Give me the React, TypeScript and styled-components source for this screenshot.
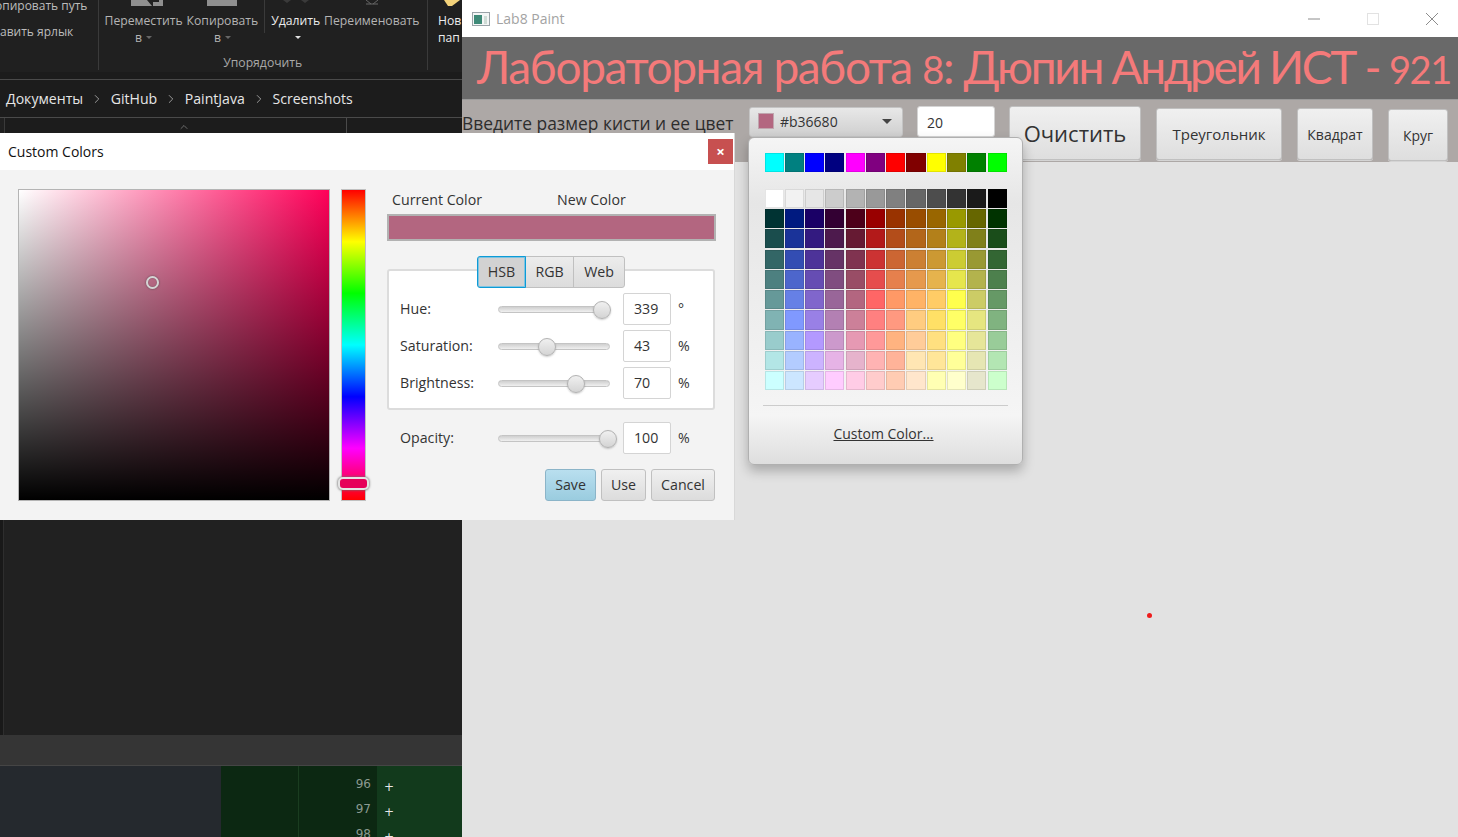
import React, { FC } from "react";
import styled, { createGlobalStyle } from "styled-components";
import { ChevronRight, ChevronUp } from "lucide-react";

const uiFont = `"Open Sans", "Noto Sans", sans-serif`;

const GlobalStyle = createGlobalStyle`
  html, body {
    margin: 0;
    padding: 0;
    height: 100%;
    overflow: hidden;
    background: #202020;
    font-family: ${uiFont};
  }
  * {
    box-sizing: border-box;
  }
`;

const topColors = [
  "#00ffff", "#008080", "#0000ff", "#000080", "#ff00ff", "#800080",
  "#ff0000", "#800000", "#ffff00", "#808000", "#008000", "#00ff00",
];

const paletteColors = [
  "#ffffff", "#f2f2f2", "#e6e6e6", "#cccccc", "#b3b3b3", "#999999", "#808080", "#666666", "#4d4d4d", "#333333", "#1a1a1a", "#000000",
  "#003333", "#001a80", "#1a0066", "#330033", "#4d001a", "#990000", "#993300", "#994d00", "#996600", "#999900", "#666600", "#003300",
  "#1a4d4d", "#1a3399", "#331a80", "#4d1a4d", "#661a33", "#b31a1a", "#b34d1a", "#b3661a", "#b3801a", "#b3b31a", "#80801a", "#1a4d1a",
  "#336666", "#334db3", "#4d3399", "#663366", "#803350", "#cc3333", "#cc6633", "#cc8033", "#cc9933", "#cccc33", "#999933", "#336633",
  "#4d8080", "#4d66cc", "#664db3", "#804d80", "#994d66", "#e64d4d", "#e6804d", "#e6994d", "#e6b34d", "#e6e64d", "#b3b34d", "#4d804d",
  "#669999", "#6680e6", "#8066cc", "#996699", "#b36680", "#ff6666", "#ff9966", "#ffb366", "#ffcc66", "#ffff4d", "#cccc66", "#669966",
  "#80b3b3", "#8099ff", "#9980e6", "#b380b3", "#cc8099", "#ff8080", "#ff9980", "#ffcc80", "#ffe066", "#ffff66", "#e6e680", "#80b380",
  "#99cccc", "#99b3ff", "#b399ff", "#cc99cc", "#e699b3", "#ff9999", "#ffb380", "#ffcc99", "#ffe080", "#ffff80", "#e6e699", "#99cc99",
  "#b3e6e6", "#b3ccff", "#ccb3ff", "#e6b3e6", "#e6b3cc", "#ffb3b3", "#ffb399", "#ffe6b3", "#ffe699", "#ffff99", "#e6e6b3", "#b3e6b3",
  "#ccffff", "#cce6ff", "#e6ccff", "#ffccff", "#ffcce6", "#ffcccc", "#ffccb3", "#ffe6cc", "#ffffb3", "#ffffcc", "#e6e6cc", "#ccffcc",
];

const sliders = [
  { label: "Hue:", value: "339", unit: "°", thumb: 103 },
  { label: "Saturation:", value: "43", unit: "%", thumb: 48 },
  { label: "Brightness:", value: "70", unit: "%", thumb: 77 },
];

const crumbs = ["Документы", "GitHub", "PaintJava", "Screenshots"];

interface SliderProps {
  label: string;
  value: string;
  unit: string;
  thumb: number;
}

const SliderRow: FC<SliderProps> = ({ label, value, unit, thumb }: SliderProps) => (
  <Row>
    <RowLabel>{label}</RowLabel>
    <Track>
      <Thumb style={{ left: thumb - 9 }} />
    </Track>
    <NumberBox>{value}</NumberBox>
    <Unit>{unit}</Unit>
  </Row>
);

export default function App() {
  return (
    <Stage>
      <GlobalStyle />
      <Explorer>
        <Ribbon>
          <ClipboardGroup>
            <ClipLine $shift={-5}>опировать путь</ClipLine>
            <ClipLine>авить ярлык</ClipLine>
          </ClipboardGroup>
          <OrganizeGroup>
            <Tools>
              <ToolPair>
                <Tool>
                  <svg width="38" height="6" viewBox="0 0 38 6">
                    <path d="M6 0h16l5 6H6zM28 6V2h6V0h4v6z" fill="#8f8f8f" />
                  </svg>
                  <ToolText>Переместить</ToolText>
                  <ToolText>в<Caret /></ToolText>
                </Tool>
                <Tool>
                  <svg width="30" height="6" viewBox="0 0 30 6">
                    <rect width="30" height="6" fill="#8f8f8f" />
                  </svg>
                  <ToolText>Копировать</ToolText>
                  <ToolText>в<Caret /></ToolText>
                </Tool>
              </ToolPair>
              <ToolPair $divided>
                <Tool>
                  <svg width="30" height="6" viewBox="0 0 30 6">
                    <path d="M2 0l4 3 4-3zM20 0l4 3 4-3z" fill="#3a3a3a" />
                  </svg>
                  <ToolText $bright>Удалить</ToolText>
                  <ToolText $bright><Caret $bright /></ToolText>
                </Tool>
                <Tool>
                  <svg width="14" height="6" viewBox="0 0 14 6">
                    <path d="M1 0l5 4M13 0L8 4M1 4h12" stroke="#666" fill="none" />
                  </svg>
                  <ToolText>Переименовать</ToolText>
                </Tool>
              </ToolPair>
            </Tools>
            <GroupCaption>Упорядочить</GroupCaption>
          </OrganizeGroup>
          <NewGroup>
            <svg width="24" height="6" viewBox="0 0 24 6">
              <path d="M6 0h16l-8 6H10z" fill="#f3d27a" />
            </svg>
            <ToolText $bright>Нов</ToolText>
            <ToolText $bright>пап</ToolText>
          </NewGroup>
        </Ribbon>
        <Breadcrumb>
          {crumbs.map((crumb, i) => (
            <React.Fragment key={crumb}>
              {i > 0 && <ChevronRight size={14} strokeWidth={1.5} color="#a8a8a8" />}
              <Crumb>{crumb}</Crumb>
            </React.Fragment>
          ))}
        </Breadcrumb>
        <ListHeader>
          <SortCell>
            <ChevronUp size={12} strokeWidth={1} color="#bbb" />
          </SortCell>
        </ListHeader>
        <ListBody />
        <StatusStrip />
        <DiffView>
          <DiffBlank />
          <DiffGutter />
          <DiffNumbers>
            <LineNo>96</LineNo>
            <LineNo>97</LineNo>
            <LineNo>98</LineNo>
          </DiffNumbers>
          <DiffCode>
            <Plus>+</Plus>
            <Plus>+</Plus>
            <Plus>+</Plus>
          </DiffCode>
        </DiffView>
      </Explorer>

      <Paint>
        <TitleBar>
          <AppIcon viewBox="0 0 18 14">
            <rect x="0.5" y="0.5" width="17" height="13" fill="#f4f6f6" stroke="#9aa3a8" />
            <rect x="2" y="3" width="8" height="9" fill="#3f8a78" />
            <rect x="12" y="4" width="3" height="8" fill="#cfdcd6" />
          </AppIcon>
          <AppName>Lab8 Paint</AppName>
          <WindowControls>
            <WinButton viewBox="0 0 14 14">
              <path d="M1 7h12" stroke="#8c8c8c" />
            </WinButton>
            <WinButton viewBox="0 0 14 14">
              <rect x="1.5" y="1.5" width="11" height="11" fill="none" stroke="#e2e2e2" />
            </WinButton>
            <WinButton viewBox="0 0 14 14">
              <path d="M1 1l12 12M13 1L1 13" stroke="#8c8c8c" fill="none" />
            </WinButton>
          </WindowControls>
        </TitleBar>
        <Banner>
          Лабораторная работа <Figures>8</Figures>: <Tight>Дюпин Андрей ИСТ - </Tight><Figures>921</Figures>
        </Banner>
        <Toolbar>
          <BrushLabel>Введите размер кисти и ее цвет</BrushLabel>
          <ColorCombo>
            <ComboSwatch />
            <ComboValue>#b36680</ComboValue>
            <ComboArrow />
          </ColorCombo>
          <SizeField>20</SizeField>
          <FxButton $w={132} $h={54} $size={22} $top={7}>Очистить</FxButton>
          <FxButton $w={126} $h={52} $size={15} $top={9}>Треугольник</FxButton>
          <FxButton $w={76} $h={52} $size={14} $top={9}>Квадрат</FxButton>
          <FxButton $w={60} $h={52} $size={14} $top={10}>Круг</FxButton>
        </Toolbar>
        <Canvas>
          <Dot />
        </Canvas>
      </Paint>

      <Dialog>
        <DialogTitle>
          <span>Custom Colors</span>
          <CloseBox>×</CloseBox>
        </DialogTitle>
        <DialogBody>
          <SvSquare>
            <SvCursor />
          </SvSquare>
          <HueBar>
            <HueThumb />
          </HueBar>
          <Controls>
            <ColorLabels>
              <CurrentLabel>Current Color</CurrentLabel>
              <span>New Color</span>
            </ColorLabels>
            <NewSwatch />
            <Tabs>
              <Tab $w={49} $active>HSB</Tab>
              <Tab $w={49}>RGB</Tab>
              <Tab $w={52}>Web</Tab>
            </Tabs>
            <SliderPanel>
              {sliders.map((s) => (
                <SliderRow key={s.label} {...s} />
              ))}
            </SliderPanel>
            <OpacityRow>
              <RowLabel>Opacity:</RowLabel>
              <Track>
                <Thumb style={{ left: 100 }} />
              </Track>
              <NumberBox>100</NumberBox>
              <Unit>%</Unit>
            </OpacityRow>
            <Actions>
              <DialogButton $w={51} $save>Save</DialogButton>
              <DialogButton $w={45}>Use</DialogButton>
              <DialogButton $w={64}>Cancel</DialogButton>
            </Actions>
          </Controls>
        </DialogBody>
      </Dialog>

      <Popup>
        <TopSwatches>
          {topColors.map((c) => (
            <Swatch key={c} $color={c} />
          ))}
        </TopSwatches>
        <SwatchGrid>
          {paletteColors.map((c, i) => (
            <Swatch key={i} $color={c} />
          ))}
        </SwatchGrid>
        <PopupRule />
        <CustomLink>Custom Color...</CustomLink>
      </Popup>
    </Stage>
  );
}

const Stage = styled.div`
  position: relative;
  display: flex;
  width: 1458px;
  height: 837px;
  overflow: hidden;
`;

/* explorer window behind the dialog */
const Explorer = styled.div`
  display: flex;
  flex-direction: column;
  width: 462px;
  height: 837px;
  background: #202020;
  color: #c8c8c8;
  overflow: hidden;
`;

const Ribbon = styled.div`
  display: flex;
  flex: none;
  height: 80px;
  border-bottom: 1px solid #4a4a4a;
  box-shadow: inset 0 -7px 0 #1c1c1c;
`;

const ClipboardGroup = styled.div`
  width: 99px;
  height: 70px;
  border-right: 1px solid #3a3a3a;
  font-size: 12px;
  line-height: 17px;
  overflow: hidden;
`;

const ClipLine = styled.div<{ $shift?: number }>`
  height: 26px;
  margin-top: -3px;
  margin-left: ${(p) => p.$shift ?? 0}px;
  white-space: nowrap;
  color: #bdbdbd;
  &:last-child {
    margin-top: 0;
  }
`;

const OrganizeGroup = styled.div`
  display: flex;
  flex-direction: column;
  width: 331px;
  height: 70px;
  border-right: 1px solid #3a3a3a;
`;

const Tools = styled.div`
  display: flex;
  height: 52px;
`;

const ToolPair = styled.div<{ $divided?: boolean }>`
  display: flex;
  align-items: flex-start;
  gap: 4px;
  padding: 0 6px;
  height: ${(p) => (p.$divided ? "33px" : "52px")};
  ${(p) => p.$divided && "border-left: 1px solid #3a3a3a; overflow: visible;"}
`;

const Tool = styled.div`
  display: flex;
  flex-direction: column;
  align-items: center;
  white-space: nowrap;
  svg {
    display: block;
    margin-bottom: 6px;
  }
`;

const ToolText = styled.div<{ $bright?: boolean }>`
  font-size: 12.2px;
  line-height: 17px;
  color: ${(p) => (p.$bright ? "#ececec" : "#b4b4b4")};
`;

const Caret = styled.span<{ $bright?: boolean }>`
  display: inline-block;
  margin-left: 4px;
  vertical-align: 3px;
  border-left: 3.5px solid transparent;
  border-right: 3.5px solid transparent;
  border-top: 3px solid ${(p) => (p.$bright ? "#e0e0e0" : "#666")};
`;

const GroupCaption = styled.div`
  text-align: center;
  font-size: 12.2px;
  line-height: 17px;
  color: #a8a8a8;
  margin-top: 2px;
`;

const NewGroup = styled.div`
  display: flex;
  flex-direction: column;
  align-items: flex-start;
  padding-left: 10px;
  white-space: nowrap;
  svg {
    display: block;
    margin-bottom: 6px;
  }
`;

const Breadcrumb = styled.div`
  display: flex;
  align-items: center;
  flex: none;
  gap: 6.8px;
  height: 38px;
  padding-left: 6px;
  background: #1c1c1c;
  border-bottom: 1px solid #4a4a4a;
`;

const Crumb = styled.span`
  font-size: 14.1px;
  color: #e6e6e6;
  white-space: nowrap;
`;

const ListHeader = styled.div`
  display: flex;
  flex: none;
  height: 15px;
  margin-left: 4px;
  background: #1c1c1c;
`;

const SortCell = styled.div`
  display: flex;
  justify-content: center;
  width: 343px;
  height: 15px;
  padding-left: 16px;
  border-left: 1px solid #3a3a3a;
  border-right: 1px solid #4a4a4a;
  svg {
    margin-top: 3px;
  }
`;

const ListBody = styled.div`
  flex: 1;
  margin-left: 0;
  border-left: 3px solid #191919;
  box-shadow: inset 1px 0 0 #2e2e2e;
  background: #212121;
`;

const StatusStrip = styled.div`
  flex: none;
  height: 31px;
  background: #353535;
  border-bottom: 1px solid #454545;
`;

const DiffView = styled.div`
  display: flex;
  flex: none;
  height: 71px;
`;

const DiffBlank = styled.div`
  width: 221px;
  background: #25292e;
`;

const DiffGutter = styled.div`
  width: 78px;
  background: #0c2812;
  border-right: 1px solid #1a3d20;
`;

const DiffNumbers = styled.div`
  width: 78px;
  padding: 6px 6px 0 0;
  text-align: right;
  background: #0c2812;
`;

const LineNo = styled.div`
  height: 25px;
  font-family: "DejaVu Sans", sans-serif;
  font-size: 12px;
  line-height: 25px;
  color: #8b9a90;
`;

const DiffCode = styled.div`
  flex: 1;
  padding: 9px 0 0 7px;
  background: #123a1c;
`;

const Plus = styled.div`
  height: 25px;
  font-family: "DejaVu Sans", sans-serif;
  font-size: 12px;
  line-height: 25px;
  color: #e6e6e6;
`;

/* paint app window */
const Paint = styled.div`
  display: flex;
  flex-direction: column;
  flex: 1;
  min-width: 0;
  background: #e2e2e2;
`;

const TitleBar = styled.div`
  display: flex;
  align-items: center;
  flex: none;
  height: 37px;
  padding-left: 10px;
  background: #ffffff;
`;

const AppIcon = styled.svg`
  width: 18px;
  height: 14px;
  margin-right: 6px;
`;

const AppName = styled.span`
  font-size: 14px;
  color: #a3a3a3;
`;

const WindowControls = styled.div`
  display: flex;
  align-items: center;
  gap: 45px;
  margin-left: auto;
  padding-right: 19px;
`;

const WinButton = styled.svg`
  width: 14px;
  height: 14px;
`;

const Banner = styled.div`
  flex: none;
  height: 62px;
  padding-left: 15px;
  font-family: Lato, "Open Sans", sans-serif;
  font-size: 46px;
  line-height: 60px;
  letter-spacing: -1.35px;
  white-space: nowrap;
  color: #f47a7a;
  background: #696969;
  overflow: hidden;
`;

const Figures = styled.span`
  font-size: 38px;
`;

const Tight = styled.span`
  letter-spacing: -2.3px;
`;

const Toolbar = styled.div`
  display: flex;
  align-items: flex-start;
  flex: none;
  height: 63px;
  background: #ada8a6;
  border-top: 1px solid #9a9a9a;
`;

const BrushLabel = styled.div`
  width: 287px;
  margin-top: 11px;
  font-size: 17.4px;
  line-height: 24px;
  white-space: nowrap;
  color: #2d2d2d;
`;

const ColorCombo = styled.div`
  display: flex;
  align-items: center;
  width: 154px;
  height: 30px;
  margin-top: 7px;
  padding: 0 10px 2px 8px;
  background: linear-gradient(#e8e8e8, #cfcfcf);
  border: 1px solid #c4c4c4;
  border-radius: 3px;
`;

const ComboSwatch = styled.div`
  width: 16px;
  height: 16px;
  background: #b36680;
  border: 1px solid #c0a5ae;
`;

const ComboValue = styled.span`
  margin-left: 6px;
  font-size: 14px;
  color: #333333;
`;

const ComboArrow = styled.span`
  margin-left: auto;
  border-left: 5px solid transparent;
  border-right: 5px solid transparent;
  border-top: 5px solid #444;
`;

const SizeField = styled.div`
  width: 78px;
  height: 31px;
  margin: 6px 0 0 14px;
  padding-left: 9px;
  font-size: 14px;
  line-height: 31px;
  color: #333333;
  background: #ffffff;
  border: 1px solid #d4d4d4;
  border-radius: 3px;
`;

const FxButton = styled.div<{ $w: number; $h: number; $size: number; $top: number }>`
  display: flex;
  align-items: center;
  justify-content: center;
  flex: none;
  width: ${(p) => p.$w}px;
  height: ${(p) => p.$h}px;
  margin: ${(p) => p.$top - 1}px 0 0 15px;
  font-size: ${(p) => p.$size}px;
  color: #333333;
  background: linear-gradient(#f0f0f0, #dedede);
  border: 1px solid #c0c0c0;
  border-radius: 3px;
  box-shadow: 0 1px 0 #d4d4d4;
  &:nth-of-type(4) {
    margin-left: 14px;
  }
`;

const Canvas = styled.div`
  position: relative;
  flex: 1;
  background: #e2e2e2;
`;

const Dot = styled.div`
  position: absolute;
  left: 684.5px;
  top: 450.5px;
  width: 5px;
  height: 5px;
  border-radius: 50%;
  background: #ee1c1c;
`;

/* custom colors dialog */
const Dialog = styled.div`
  position: absolute;
  left: 0;
  top: 133px;
  width: 734px;
  height: 387px;
  display: flex;
  flex-direction: column;
  background: #f3f3f3;
  box-shadow: 1px 0 0 #d8d8d8;
`;

const DialogTitle = styled.div`
  display: flex;
  align-items: center;
  justify-content: space-between;
  flex: none;
  height: 37px;
  padding: 0 1px 0 8px;
  font-size: 14px;
  color: #111111;
  background: #ffffff;
`;

const CloseBox = styled.div`
  width: 25px;
  height: 25px;
  font-size: 15px;
  font-weight: 700;
  line-height: 24px;
  text-align: center;
  color: #ffffff;
  background: #c75050;
`;

const DialogBody = styled.div`
  display: flex;
  flex: 1;
  padding: 19px 18px 0;
`;

const SvSquare = styled.div`
  position: relative;
  flex: none;
  width: 312px;
  height: 312px;
  border: 1px solid #b4b4b4;
  background:
    linear-gradient(rgba(0, 0, 0, 0), #000000),
    linear-gradient(90deg, #ffffff, #ff0059);
`;

const SvCursor = styled.div`
  position: absolute;
  left: 127px;
  top: 86px;
  width: 13px;
  height: 13px;
  border: 2px solid #d4d4d4;
  border-radius: 50%;
  box-shadow: 0 0 2px #444, inset 0 0 1px #444;
`;

const HueBar = styled.div`
  position: relative;
  flex: none;
  width: 25px;
  height: 312px;
  margin-left: 11px;
  border: 1px solid #c0c0c0;
  background: linear-gradient(
    #ff0000,
    #ffff00 16.7%,
    #00ff00 33.3%,
    #00ffff 50%,
    #0000ff 66.7%,
    #ff00ff 83.3%,
    #ff0000
  );
`;

const HueThumb = styled.div`
  position: absolute;
  left: -4px;
  top: 287px;
  width: 31px;
  height: 13px;
  border: 2px solid #e4e4e4;
  border-radius: 5px;
  background: #e6005a;
  box-shadow: 0 0 2px 1px rgba(110, 110, 110, 0.6);
`;

const Controls = styled.div`
  flex: none;
  width: 329px;
  margin-left: 21px;
  font-size: 14.2px;
  color: #333333;
`;

const ColorLabels = styled.div`
  display: flex;
  height: 25px;
  padding-left: 5px;
  line-height: 21px;
`;

const CurrentLabel = styled.span`
  width: 165px;
`;

const NewSwatch = styled.div`
  height: 27px;
  background: #b36680;
  border: 2px solid #b2b2b2;
`;

const Tabs = styled.div`
  position: relative;
  display: flex;
  width: 148px;
  height: 32px;
  margin: 15px 0 -19px 90px;
`;

const Tab = styled.div<{ $active?: boolean; $w: number }>`
  display: flex;
  align-items: center;
  justify-content: center;
  flex: none;
  width: ${(p) => p.$w}px;
  padding-bottom: 2px;
  color: #333333;
  background: ${(p) => (p.$active ? "#d2d2d2" : "linear-gradient(#ececec, #dcdcdc)")};
  border: 1px solid ${(p) => (p.$active ? "#0d9bd6" : "#c0c0c0")};
  margin-left: -1px;
  ${(p) => p.$active && "z-index: 1; box-shadow: inset 0 0 0 1px #7fc4e2;"}
  &:first-child {
    margin-left: 0;
    border-radius: 3px 0 0 3px;
  }
  &:last-child {
    border-radius: 0 3px 3px 0;
  }
`;

const SliderPanel = styled.div`
  display: flex;
  flex-direction: column;
  gap: 5px;
  width: 328px;
  height: 141px;
  padding: 22px 0 0 11px;
  background: #ffffff;
  border: 2px solid #dcdcdc;
  border-radius: 3px;
`;

const Row = styled.div`
  display: flex;
  align-items: center;
  height: 32px;
`;

const OpacityRow = styled(Row)`
  margin: 12px 0 0 13px;
`;

const RowLabel = styled.span`
  width: 98px;
  flex: none;
  padding-bottom: 2px;
`;

const Track = styled.div`
  position: relative;
  flex: none;
  width: 112px;
  height: 7px;
  border: 1px solid #c4c4c4;
  border-radius: 4px;
  background: linear-gradient(#cfcfcf, #f0f0f0);
`;

const Thumb = styled.div`
  position: absolute;
  top: -6px;
  width: 18px;
  height: 18px;
  border: 1px solid #b2b2b2;
  border-radius: 50%;
  background: linear-gradient(#f0f0f0, #d4d4d4);
  box-shadow: 0 1px 2px rgba(0, 0, 0, 0.2);
`;

const NumberBox = styled.div`
  flex: none;
  width: 48px;
  height: 32px;
  margin-left: 13px;
  padding-left: 10px;
  line-height: 30px;
  background: #ffffff;
  border: 1px solid #d4d4d4;
  border-radius: 2px;
`;

const Unit = styled.span`
  margin-left: 7px;
  padding-bottom: 2px;
`;

const Actions = styled.div`
  display: flex;
  justify-content: flex-end;
  gap: 5px;
  width: 328px;
  margin-top: 15px;
`;

const DialogButton = styled.div<{ $w: number; $save?: boolean }>`
  display: flex;
  align-items: center;
  justify-content: center;
  width: ${(p) => p.$w}px;
  height: 32px;
  padding-bottom: 2px;
  color: #333333;
  background: ${(p) =>
    p.$save ? "linear-gradient(#b9dfef, #9accdf)" : "linear-gradient(#f0f0f0, #dcdcdc)"};
  border: 1px solid ${(p) => (p.$save ? "#8bb4c8" : "#c0c0c0")};
  border-radius: 3px;
`;

/* colour picker popup */
const Popup = styled.div`
  position: absolute;
  left: 748px;
  top: 137px;
  width: 275px;
  height: 328px;
  padding: 14px 14px 0 15px;
  background: linear-gradient(#f5f5f5, #e6e6e6 20%, #f5f5f5 85%, #dedede);
  border: 1px solid #b0b0b0;
  border-radius: 6px;
  box-shadow: 0 6px 12px rgba(0, 0, 0, 0.25);
`;

const TopSwatches = styled.div`
  display: grid;
  grid-template-columns: repeat(12, 20.27px);
  grid-auto-rows: 20.27px;
`;

const SwatchGrid = styled(TopSwatches)`
  margin-top: 16px;
`;

const Swatch = styled.div<{ $color: string }>`
  margin: 0.6px;
  background: ${(p) => p.$color};
  outline: 1px solid rgba(0, 0, 0, 0.1);
  outline-offset: -1px;
`;

const PopupRule = styled.div`
  height: 1px;
  margin: 14px 0 0 -1px;
  background: #cccccc;
`;

const CustomLink = styled.div`
  margin-top: 18px;
  padding-right: 5px;
  text-align: center;
  font-size: 14px;
  line-height: 20px;
  color: #333333;
  text-decoration: underline;
`;
